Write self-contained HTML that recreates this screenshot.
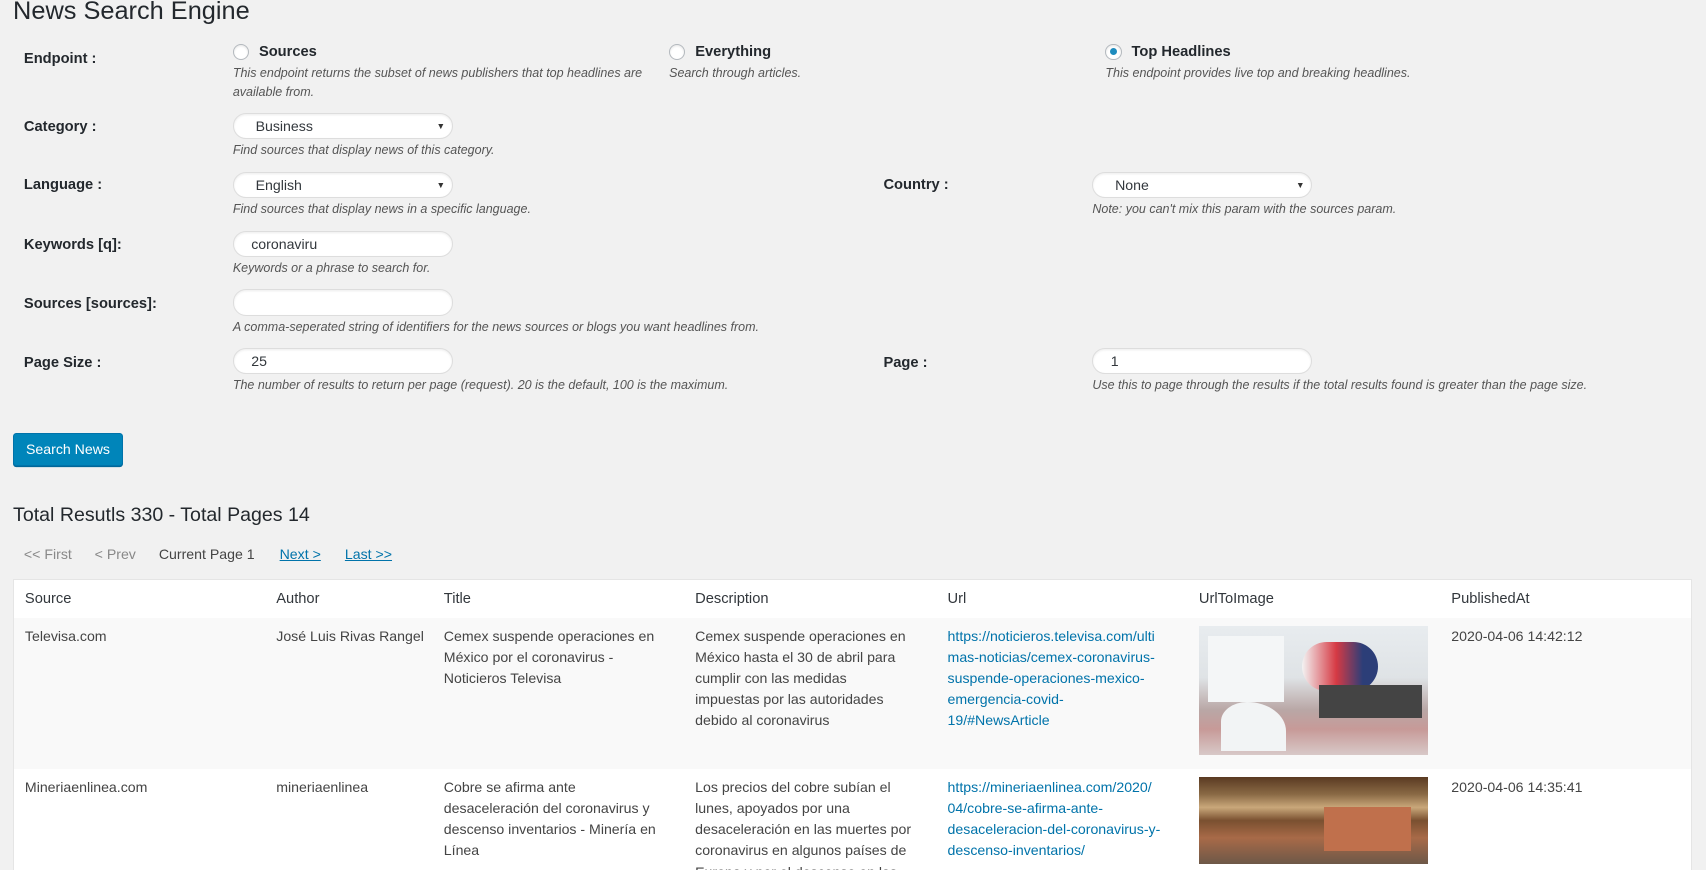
<!DOCTYPE html>
<html><head><meta charset="utf-8">
<style>
html,body{margin:0;padding:0;background:#f1f1f1;overflow:hidden}
body{width:1706px;height:870px}
#w{zoom:1.088;position:relative;width:1568px;height:800px;font-family:"Liberation Sans",sans-serif;color:#444;font-size:13.5px}
.a{position:absolute;white-space:nowrap}
.t{font-size:23.3px;color:#23282d;top:-3px;left:12px}
.l{font-weight:bold;color:#23282d;font-size:13.5px;left:22px;margin-top:3px}
.d{font-style:italic;font-size:11.5px;color:#555;line-height:17px;margin-top:1px}
.sel,.in{position:absolute;width:202px;height:24px;background:#fff;border:1px solid #ddd;border-radius:12px;box-sizing:border-box;box-shadow:inset 0 1px 2px rgba(0,0,0,.07);font-size:13px;color:#32373c;line-height:23px;padding-left:20px}
.in{padding-left:16px}
.sel:after{content:"▼";position:absolute;right:6px;top:0;font-size:8px;color:#333}
.r{position:absolute;width:15px;height:15px;border:1px solid #b4b9be;border-radius:50%;background:#fff;box-sizing:border-box;box-shadow:inset 0 1px 2px rgba(0,0,0,.1)}
.r.on:after{content:"";position:absolute;left:3px;top:3px;width:7px;height:7px;border-radius:50%;background:#1e8cbe}
.rl{font-weight:bold;color:#23282d;font-size:13.5px}
.btn{position:absolute;left:12px;top:398px;width:101px;height:30px;background:#0085ba;border:1px solid #0073aa;border-radius:3px;box-sizing:border-box;color:#fff;font-size:13px;line-height:28px;text-align:center;box-shadow:0 1px 0 #006799}
.lk{color:#0073aa;text-decoration:underline}
.tbl{position:absolute;left:12px;top:532px;width:1543px;height:280px;background:#fff;border:1px solid #e5e5e5;box-sizing:border-box}
.hdr{position:absolute;left:0;top:0;width:100%;height:35px;border-bottom:1px solid #e1e1e1}
.row1{position:absolute;left:0;top:35px;width:100%;height:139px;background:#f9f9f9}
.c{position:absolute;line-height:19.5px;font-size:13px;white-space:nowrap}
</style></head><body><div id="w">
<div class="a t">News Search Engine</div>

<div class="a l" style="top:44px">Endpoint :</div>
<div class="r" style="left:214px;top:40px"></div><div class="a rl" style="left:238px;top:40px">Sources</div>
<div class="a d" style="left:214px;top:58px">This endpoint returns the subset of news publishers that top headlines are<br>available from.</div>
<div class="r" style="left:615px;top:40px"></div><div class="a rl" style="left:639px;top:40px">Everything</div>
<div class="a d" style="left:615px;top:58px">Search through articles.</div>
<div class="r on" style="left:1016px;top:40px"></div><div class="a rl" style="left:1040px;top:40px">Top Headlines</div>
<div class="a d" style="left:1016px;top:58px">This endpoint provides live top and breaking headlines.</div>

<div class="a l" style="top:106px">Category :</div>
<div class="sel" style="left:214px;top:104px">Business</div>
<div class="a d" style="left:214px;top:129px">Find sources that display news of this category.</div>

<div class="a l" style="top:160px">Language :</div>
<div class="sel" style="left:214px;top:158px">English</div>
<div class="a d" style="left:214px;top:183px">Find sources that display news in a specific language.</div>
<div class="a l" style="top:160px;left:812px">Country :</div>
<div class="sel" style="left:1004px;top:158px">None</div>
<div class="a d" style="left:1004px;top:183px">Note: you can't mix this param with the sources param.</div>

<div class="a l" style="top:215px">Keywords [q]:</div>
<div class="in" style="left:214px;top:212px">coronaviru</div>
<div class="a d" style="left:214px;top:237px">Keywords or a phrase to search for.</div>

<div class="a l" style="top:269px">Sources [sources]:</div>
<div class="in" style="left:214px;top:266px"></div>
<div class="a d" style="left:214px;top:291px">A comma-seperated string of identifiers for the news sources or blogs you want headlines from.</div>

<div class="a l" style="top:323px">Page Size :</div>
<div class="in" style="left:214px;top:320px">25</div>
<div class="a d" style="left:214px;top:345px">The number of results to return per page (request). 20 is the default, 100 is the maximum.</div>
<div class="a l" style="top:323px;left:812px">Page :</div>
<div class="in" style="left:1004px;top:320px">1</div>
<div class="a d" style="left:1004px;top:345px">Use this to page through the results if the total results found is greater than the page size.</div>

<div class="btn">Search News</div>

<div class="a" style="left:12px;top:463px;font-size:18px;color:#23282d">Total Resutls 330 - Total Pages 14</div>
<div class="a" style="left:22px;top:502px;font-size:13px;color:#888">&lt;&lt; First</div>
<div class="a" style="left:87px;top:502px;font-size:13px;color:#888">&lt; Prev</div>
<div class="a" style="left:146px;top:502px;font-size:13px;color:#444">Current Page 1</div>
<div class="a lk" style="left:257px;top:502px;font-size:13px">Next &gt;</div>
<div class="a lk" style="left:317px;top:502px;font-size:13px">Last &gt;&gt;</div>

<div class="tbl">
<div class="hdr"></div><div class="row1"></div>
<div class="c" style="left:10px;top:8px;font-size:13.5px;color:#32373c">Source</div>
<div class="c" style="left:241px;top:8px;font-size:13.5px;color:#32373c">Author</div>
<div class="c" style="left:395px;top:8px;font-size:13.5px;color:#32373c">Title</div>
<div class="c" style="left:626px;top:8px;font-size:13.5px;color:#32373c">Description</div>
<div class="c" style="left:858px;top:8px;font-size:13.5px;color:#32373c">Url</div>
<div class="c" style="left:1089px;top:8px;font-size:13.5px;color:#32373c">UrlToImage</div>
<div class="c" style="left:1321px;top:8px;font-size:13.5px;color:#32373c">PublishedAt</div>

<div class="c" style="left:10px;top:42px">Televisa.com</div>
<div class="c" style="left:241px;top:42px">José Luis Rivas Rangel</div>
<div class="c" style="left:395px;top:42px">Cemex suspende operaciones en<br>México por el coronavirus -<br>Noticieros Televisa</div>
<div class="c" style="left:626px;top:42px">Cemex suspende operaciones en<br>México hasta el 30 de abril para<br>cumplir con las medidas<br>impuestas por las autoridades<br>debido al coronavirus</div>
<div class="c" style="left:858px;top:42px;color:#0073aa">https://noticieros.televisa.com/ulti<br>mas-noticias/cemex-coronavirus-<br>suspende-operaciones-mexico-<br>emergencia-covid-<br>19/#NewsArticle</div>
<div style="position:absolute;left:1089px;top:42px;width:211px;height:119px;background:linear-gradient(180deg,#e8ecef 0%,#dfe3e6 40%,#b9a7a6 65%,#c79a98 80%,#d8c9c8 100%)">
<div style="position:absolute;left:8px;top:10px;width:70px;height:60px;background:#f4f6f7"></div>
<div style="position:absolute;left:95px;top:15px;width:70px;height:45px;border-radius:30px;background:linear-gradient(90deg,#f3f3f3,#d63a44 45%,#2c3e78 80%)"></div>
<div style="position:absolute;left:110px;top:55px;width:95px;height:30px;background:#444"></div>
<div style="position:absolute;left:20px;top:70px;width:60px;height:45px;background:#f2f4f5;border-radius:40% 60% 0 0"></div>
</div>
<div class="c" style="left:1321px;top:42px">2020-04-06 14:42:12</div>

<div class="c" style="left:10px;top:181px">Mineriaenlinea.com</div>
<div class="c" style="left:241px;top:181px">mineriaenlinea</div>
<div class="c" style="left:395px;top:181px">Cobre se afirma ante<br>desaceleración del coronavirus y<br>descenso inventarios - Minería en<br>Línea</div>
<div class="c" style="left:626px;top:181px">Los precios del cobre subían el<br>lunes, apoyados por una<br>desaceleración en las muertes por<br>coronavirus en algunos países de<br>Europa y por el descenso en las</div>
<div class="c" style="left:858px;top:181px;color:#0073aa">https://mineriaenlinea.com/2020/<br>04/cobre-se-afirma-ante-<br>desaceleracion-del-coronavirus-y-<br>descenso-inventarios/</div>
<div style="position:absolute;left:1089px;top:181px;width:211px;height:80px;background:linear-gradient(180deg,#5a3a22 0%,#8a6a45 20%,#c9a77a 35%,#7a5030 50%,#a86a48 70%,#6d5848 100%)">
<div style="position:absolute;left:115px;top:28px;width:80px;height:40px;background:#c0704c"></div>
</div>
<div class="c" style="left:1321px;top:181px">2020-04-06 14:35:41</div>
</div>
</div></body></html>
